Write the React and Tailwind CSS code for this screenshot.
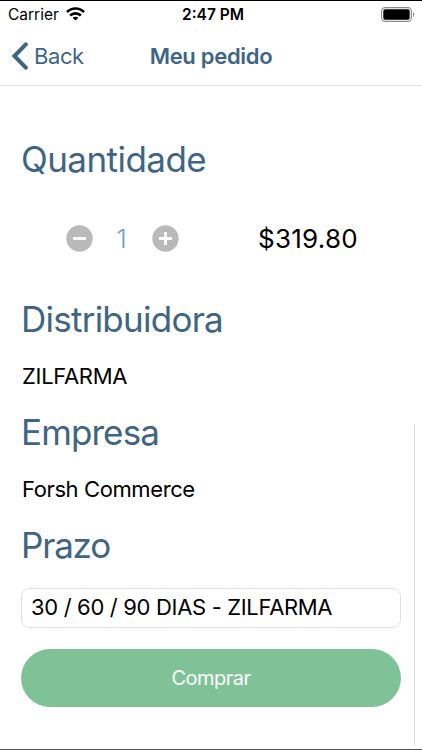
const sections = [
  {
    title: 'Distribuidora',
    titleClass: 'tracking-[-0.75px]',
    value: 'ZILFARMA',
    valueClass: 'tracking-[-0.3px]',
  },
  {
    title: 'Empresa',
    titleClass: 'tracking-[-0.9px]',
    value: 'Forsh Commerce',
    valueClass: 'tracking-[-0.4px]',
  },
];

const WifiIcon = () => (
  <svg width="19" height="14" viewBox="0 0 19 14" fill="none" stroke="#000" strokeWidth="2.6">
    <path d="M1 5C5.7.3 13.3.3 18 5" />
    <path d="M4.1 8.5c3-2.9 7.8-2.9 10.8 0" />
    <path d="M9.5 13.5 6.6 10.8c1.6-1.5 4.2-1.5 5.8 0z" fill="#000" stroke="none" />
  </svg>
);

const BatteryIcon = () => (
  <svg width="34" height="15" viewBox="0 0 34 15" fill="none">
    <rect x="0.6" y="0.6" width="29.8" height="13.8" rx="3.6" stroke="#8c8c8c" strokeWidth="1.1" />
    <rect x="2.3" y="2.3" width="26.4" height="10.4" rx="1.8" fill="#000" />
    <path d="M32 5.2c1.7.7 1.7 3.9 0 4.6z" fill="#8c8c8c" />
  </svg>
);

const StepperButton = ({ label, plus = false }) => (
  <button type="button" aria-label={label} className="h-[27px] w-[27px]">
    <svg width="27" height="27" viewBox="0 0 27 27">
      <circle cx="13.5" cy="13.5" r="13.2" fill="#b9b9b9" />
      <path d={plus ? 'M7 13.5h13M13.5 7v13' : 'M7 13.5h13'} stroke="#fff" strokeWidth="2.8" />
    </svg>
  </button>
);

const StatusBar = () => (
  <div className="grid h-[27px] grid-cols-[1fr_auto_1fr] items-center border-t border-black pr-[7px] pl-2 text-[15.5px] text-black">
    <div className="flex items-center gap-[7px]">
      <span className="pt-[2px]">Carrier</span>
      <WifiIcon />
    </div>
    <span className="pt-[2px] pl-[3px] font-semibold">2:47 PM</span>
    <div className="flex justify-end">
      <BatteryIcon />
    </div>
  </div>
);

const NavBar = () => (
  <header className="grid h-[59px] grid-cols-[1fr_auto_1fr] items-center border-b border-[#e2e2e2] px-[11px] text-[22px] text-[#3f6584]">
    <button type="button" className="flex items-center gap-1.5">
      <svg width="17" height="28" viewBox="0 0 17 28" fill="none" stroke="currentColor" strokeWidth="4" strokeLinecap="round" strokeLinejoin="miter">
        <path d="M14.8 2.3 3.4 14l11.4 11.7" />
      </svg>
      <span className="tracking-[-0.4px]">Back</span>
    </button>
    <h1 className="font-semibold tracking-[-0.3px]">Meu pedido</h1>
  </header>
);

const SectionTitle = ({ className = '', children }) => (
  <h2 className={`h-[56px] text-[35px] leading-[56px] text-[#3f6584] ${className}`}>{children}</h2>
);

const App = () => (
  <div className="relative flex h-[750px] w-[422px] flex-col overflow-hidden border-b border-[#555] bg-white font-['Inter',sans-serif]">
    <StatusBar />
    <NavBar />
    <main className="flex flex-col px-[21px] pt-[45px] text-black">
      <SectionTitle className="tracking-[-0.55px]">Quantidade</SectionTitle>
      <div className="mb-[2px] flex h-[102px] items-center pl-[45px]">
        <StepperButton label="Menos" />
        <span className="w-[59px] pr-[2px] text-center text-[26px] font-light text-[#6c9fc4]">1</span>
        <StepperButton label="Mais" plus />
        <span className="ml-[79px] text-[26px] tracking-[0.25px]">$319.80</span>
      </div>
      {sections.map((section) => (
        <section key={section.title} className="h-[113px]">
          <SectionTitle className={section.titleClass}>{section.title}</SectionTitle>
          <p className={`h-[57px] pl-px text-[22px] leading-[58px] ${section.valueClass}`}>{section.value}</p>
        </section>
      ))}
      <SectionTitle className="tracking-[-1.2px]">Prazo</SectionTitle>
      <div className="mt-[15px] flex h-10 items-center rounded-lg border border-[#e2e2e2] pb-px pl-[9px] text-[22px] tracking-[-0.33px]">
        30 / 60 / 90 DIAS - ZILFARMA
      </div>
      <button type="button" className="mt-[21px] h-[58px] rounded-full bg-[#7fc297] text-[20px] tracking-[-0.5px] text-white">
        Comprar
      </button>
    </main>
    {/* scroll indicator over the content */}
    <div className="absolute top-[424px] right-[7px] h-[321px] w-px bg-[#dedede]" />
  </div>
);

export default App;
